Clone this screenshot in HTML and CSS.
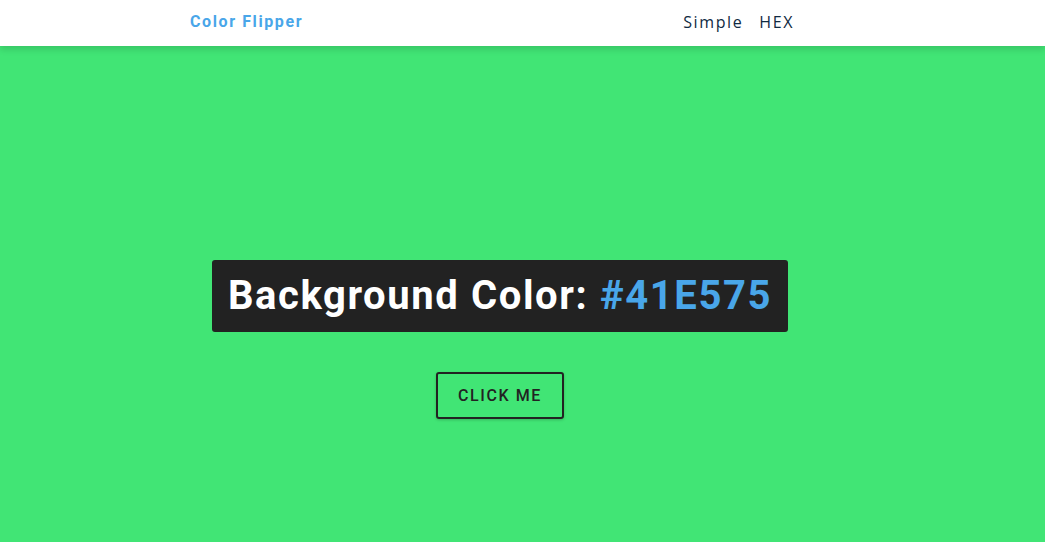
FILE: index.html
```html
<!DOCTYPE html>
<html lang="en">
<head>
<meta charset="utf-8">
<title>Color Flipper</title>
<link rel="stylesheet" href="styles.css">
</head>
<body>
<nav class="nav">
  <div class="frame">
    <div class="nav-center">
      <h4 class="logo">Color Flipper</h4>
      <ul class="nav-links">
        <li><a href="#">Simple</a></li>
        <li><a href="#">HEX</a></li>
      </ul>
    </div>
  </div>
</nav>
<main class="main">
  <div class="frame">
    <div class="container">
      <h2 class="title">Background Color: <span class="color">#41E575</span></h2>
      <button class="btn">click me</button>
    </div>
  </div>
</main>
</body>
</html>
```
FILE: styles.css
```css
* { box-sizing: border-box; margin: 0; padding: 0; }
html, body { height: 100%; }
body {
  background: #41e575;
  font-family: "Roboto", "Liberation Sans", sans-serif;
  color: #222;
  overflow: hidden;
}
.frame { width: 1000px; }
.nav {
  background: #fff;
  height: 46px;
  box-shadow: 0 4px 6px rgba(0, 0, 0, 0.12);
  position: relative;
}
.nav-center {
  width: 620px;
  margin: 0 auto;
  height: 46px;
  display: flex;
  justify-content: space-between;
  align-items: center;
}
.logo {
  color: #49a6e9;
  font-family: "Roboto", sans-serif;
  font-weight: 700;
  font-size: 16px;
  letter-spacing: 1.6px;
  margin-top: -4px;
}
.nav-links {
  list-style: none;
  display: flex;
  margin-right: 16px;
  margin-top: -2px;
}
.nav-links a {
  font-family: "Open Sans", sans-serif;
  font-size: 16px;
  letter-spacing: 1.6px;
  color: #102a42;
  text-decoration: none;
  margin-left: 16px;
}
.container {
  display: flex;
  flex-direction: column;
  align-items: center;
  padding-top: 214px;
}
.title {
  background: #222;
  color: #fff;
  border-radius: 3px;
  font-size: 40px;
  font-weight: 700;
  letter-spacing: 1.6px;
  padding: 8px 16px;
  line-height: 56px;
}
.color { color: #49a6e9; }
.btn {
  margin-top: 40px;
  background: transparent;
  border: 2px solid #222;
  border-radius: 3px;
  font-family: "Roboto", sans-serif;
  font-weight: 500;
  font-size: 16px;
  letter-spacing: 1.6px;
  text-transform: uppercase;
  color: #222;
  width: 128px;
  height: 47px;
  box-shadow: 0 1px 3px rgba(0, 0, 0, 0.2);
  cursor: pointer;
}
```
